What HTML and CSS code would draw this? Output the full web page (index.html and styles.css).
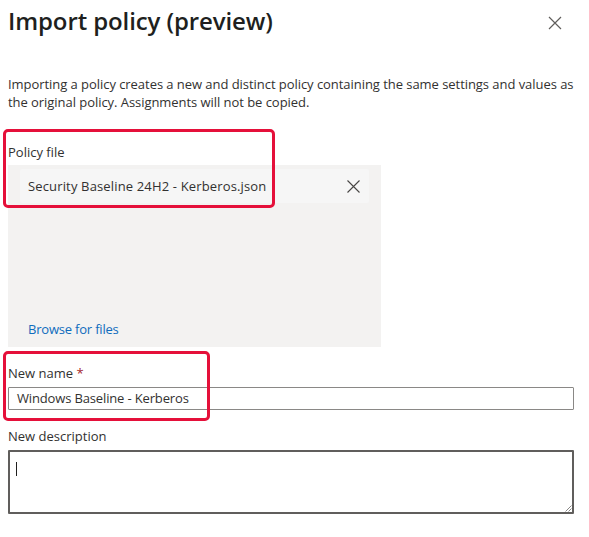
FILE: index.html
```html
<!DOCTYPE html>
<html lang="en">
<head>
<meta charset="utf-8">
<title>Import policy (preview)</title>
<link rel="stylesheet" href="styles.css">
</head>
<body>
<div class="panel">
  <header class="header">
    <h1 class="title">Import policy (preview)</h1>
    <button class="close" aria-label="Close">
      <svg width="14" height="14" viewBox="0 0 14 14"><path d="M1 1L13 13M13 1L1 13" stroke="#605e5c" stroke-width="1.2" fill="none"/></svg>
    </button>
  </header>
  <p class="intro">Importing a policy creates a new and distinct policy containing the same settings and values as<br>the original policy. Assignments will not be copied.</p>

  <div class="field file-field">
    <div class="label">Policy file</div>
    <div class="dropzone">
      <div class="chip">
        <span class="chip-name">Security Baseline 24H2 - Kerberos.json</span>
        <svg class="chip-x" width="13" height="13" viewBox="0 0 13 13"><path d="M0.5 0.5L12.5 12.5M12.5 0.5L0.5 12.5" stroke="#484644" stroke-width="1.1" fill="none"/></svg>
      </div>
      <a class="browse" href="#">Browse for files</a>
    </div>
    <div class="highlight hl-file"></div>
  </div>

  <div class="field name-field">
    <div class="label">New name <span class="req">*</span></div>
    <div class="input">Windows Baseline - Kerberos</div>
    <div class="highlight hl-name"></div>
  </div>

  <div class="field desc-field">
    <div class="label">New description</div>
    <div class="textarea">
      <span class="caret"></span>
      <svg class="grip" width="8" height="8" viewBox="0 0 8 8"><path d="M7.5 1.5L1.5 7.5M7.5 4.5L4.5 7.5" stroke="#8a8886" stroke-width="1" fill="none"/></svg>
    </div>
  </div>
</div>
</body>
</html>
```

FILE: styles.css
```css
html, body {
  margin: 0;
  padding: 0;
  background: #ffffff;
}
body {
  font-family: "Open Sans", "Noto Sans", "Liberation Sans", sans-serif;
  color: #323130;
  font-size: 13px;
}
.panel {
  padding: 0 15px 0 8px;
}
.header {
  display: flex;
  justify-content: space-between;
  align-items: flex-start;
  padding-top: 5px;
}
.title {
  margin: 0;
  font-size: 24px;
  line-height: 32px;
  font-weight: 600;
  color: #201f1e;
  letter-spacing: -0.1px;
}
.close {
  border: 0;
  background: transparent;
  padding: 0;
  margin: 11px 12px 0 0;
  width: 14px;
  height: 14px;
  display: flex;
}
.intro {
  margin: 38px 0 0;
  line-height: 18px;
  font-size: 13px;
  letter-spacing: -0.05px;
  white-space: nowrap;
}
.field {
  position: relative;
}
.label {
  line-height: 18px;
  font-size: 13px;
}
.file-field {
  margin-top: 32px;
}
.dropzone {
  margin-top: 4px;
  width: 373px;
  height: 182px;
  box-sizing: border-box;
  background: #f3f2f1;
  padding: 4px 12px 9px 12px;
  display: flex;
  flex-direction: column;
  justify-content: space-between;
}
.chip {
  height: 34px;
  background: #f6f6f6;
  display: flex;
  align-items: center;
  justify-content: space-between;
  padding: 0 9px 0 8px;
  border-radius: 2px;
}
.chip-name {
  font-size: 13px;
  letter-spacing: 0.15px;
}
.browse {
  color: #0f6cbd;
  text-decoration: none;
  line-height: 18px;
  padding-left: 8px;
  font-size: 13px;
  letter-spacing: -0.2px;
}
.name-field {
  margin-top: 17px;
}
.req {
  color: #a4262c;
}
.input {
  margin-top: 5px;
  height: 23px;
  box-sizing: border-box;
  border: 1px solid #8a8886;
  border-radius: 1px;
  padding: 0 8px;
  line-height: 21px;
  font-size: 13px;
  letter-spacing: -0.15px;
  width: 566px;
}
.desc-field {
  margin-top: 17px;
}
.textarea {
  position: relative;
  margin-top: 5px;
  width: 566px;
  height: 64px;
  box-sizing: border-box;
  border: 2px solid #605e5c;
  border-radius: 1px;
  padding: 10px 6px;
}
.caret {
  display: block;
  width: 1px;
  height: 14px;
  background: #201f1e;
}
.grip {
  position: absolute;
  right: 0;
  bottom: 0;
}
.highlight {
  position: absolute;
  border: 3px solid #e5103a;
  border-radius: 5px;
  pointer-events: none;
  box-sizing: border-box;
}
.hl-file {
  left: -5px;
  top: -14px;
  width: 272px;
  height: 79px;
}
.hl-name {
  left: -5px;
  top: -13px;
  width: 207px;
  height: 70px;
}
```
